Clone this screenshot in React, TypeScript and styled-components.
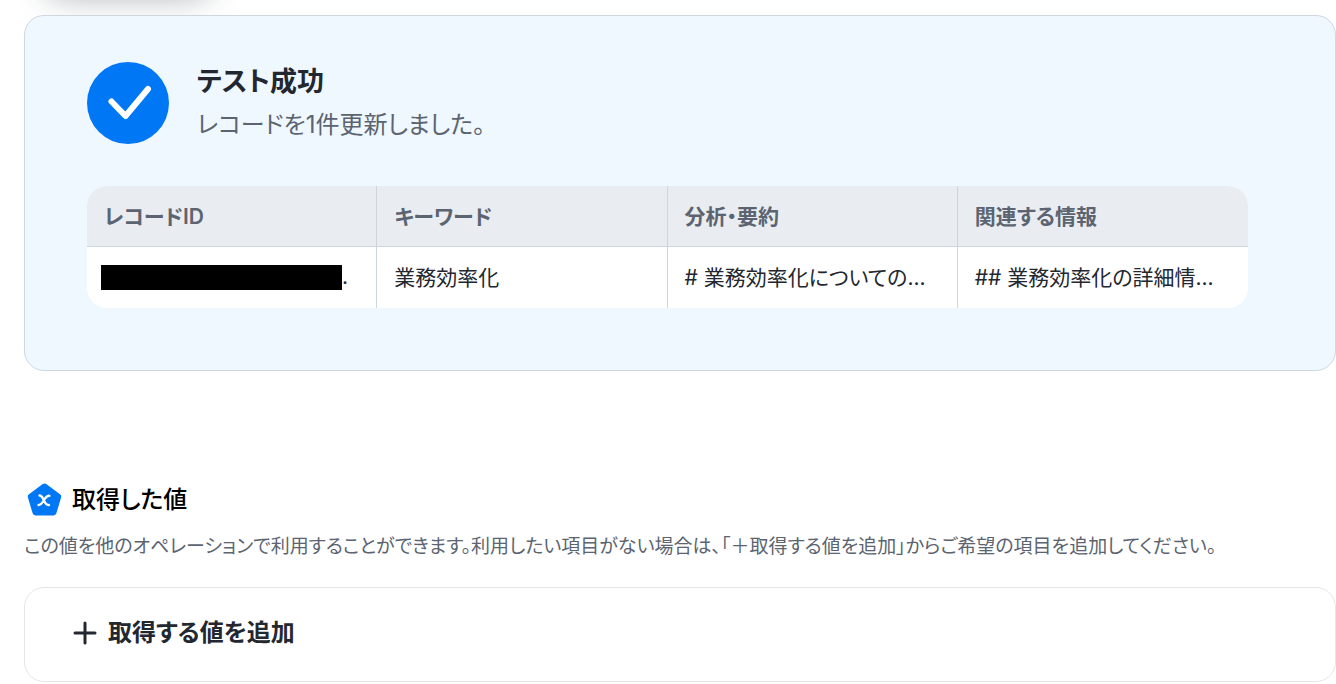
import React from 'react';
import styled, { createGlobalStyle } from 'styled-components';

const GlobalStyle = createGlobalStyle`
  *, *::before, *::after { box-sizing: border-box; }
  body {
    margin: 0;
    background: #fff;
    color: #23272f;
    font-family: Inter, "Noto Sans CJK JP", sans-serif;
    font-feature-settings: "palt";
  }
  h2, h3, p { margin: 0; }
`;

const Page = styled.main`
  padding: 15px 0 0 24px;
  overflow: hidden;
`;

const FloatingTab = styled.div`
  height: 40px;
  width: 160px;
  margin: -67px 0 27px 24px;
  border-radius: 12px;
  box-shadow: 0 8px 32px rgba(35, 50, 60, 0.4);
`;

const ResultPanel = styled.section`
  padding: 46px 87px 62px 62px;
  border: 1px solid #cdd7e1;
  border-radius: 20px;
  background: #eff7ff;
`;

const ResultHeader = styled.header`
  display: flex;
  align-items: flex-start;
  gap: 28px;
  margin-bottom: 38px;
`;

const StatusIcon = styled.svg`
  flex: none;
  width: 82px;
  height: 82px;
`;

const ResultTitle = styled.h2`
  font-size: 27px;
  line-height: 40px;
  font-weight: 700;
`;

const ResultMessage = styled.p`
  color: #5b6470;
  font-size: 24px;
  line-height: 46px;
  font-weight: 400;
`;

const TableFrame = styled.div`
  overflow: hidden;
  border-radius: 20px;
  background: #fff;
`;

const Table = styled.table`
  width: 100%;
  table-layout: fixed;
  border-collapse: separate;
  border-spacing: 0;
  font-size: 21px;
  line-height: 30px;
  text-align: left;
`;

const cell = `
  overflow: hidden;
  white-space: nowrap;
  &:not(:last-child) { border-right: 1px solid #cdd5dd; }
`;

const HeadCell = styled.th`
  ${cell}
  padding: 16px 17px 14px;
  border-bottom: 1px solid #cdd5dd;
  background: #e9edf2;
  color: #5b6470;
  font-weight: 600;
`;

const DataCell = styled.td<{ $masked?: boolean }>`
  ${cell}
  padding: ${(p) => (p.$masked ? '15px 14px 16px' : '16px 17px 15px')};
`;

const MaskedValue = styled.span`
  display: flex;
  align-items: center;
  height: 30px;
`;

const Redaction = styled.span`
  width: 241px;
  height: 25px;
  background: #000;
`;

const ValuesSection = styled.section`
  margin-top: 109px;
`;

const SectionTitle = styled.h2`
  display: flex;
  align-items: center;
  gap: 8px;
  color: #000;
  font-size: 24px;
  line-height: 40px;
  font-weight: 500;
`;

const ValueIcon = styled.svg`
  flex: none;
  width: 40px;
  height: 40px;
`;

const Description = styled.p`
  margin-top: 12px;
  color: #5b6470;
  font-size: 19px;
  line-height: 30px;
`;

const AddCard = styled.div`
  margin-top: 25px;
  padding: 23px 48px 26px;
  border: 1px solid #e6e6e6;
  border-radius: 20px;
`;

const AddButton = styled.button`
  display: flex;
  align-items: center;
  gap: 11px;
  padding: 0;
  border: 0;
  background: none;
  color: inherit;
  font: inherit;
  font-feature-settings: inherit;
  font-size: 24px;
  line-height: 44px;
  font-weight: 600;
  cursor: pointer;
`;

const headings = ['レコードID', 'キーワード', '分析・要約', '関連する情報'];
const values = ['業務効率化', '# 業務効率化についての...', '## 業務効率化の詳細情...'];

export default function App() {
  return (
    <>
      <GlobalStyle />
      <Page>
        <FloatingTab aria-hidden="true" />
        <ResultPanel>
          <ResultHeader>
            <StatusIcon viewBox="0 0 82 82" aria-hidden="true">
              <circle cx="41" cy="41" r="41" fill="#0077f5" />
              <path
                d="M24.5 39.5 38.5 54 61 27"
                fill="none"
                stroke="#fff"
                strokeWidth="6"
                strokeLinecap="round"
                strokeLinejoin="round"
              />
            </StatusIcon>
            <div>
              <ResultTitle>テスト成功</ResultTitle>
              <ResultMessage>レコードを1件更新しました。</ResultMessage>
            </div>
          </ResultHeader>
          <TableFrame>
            <Table>
              <thead>
                <tr>
                  {headings.map((h) => (
                    <HeadCell key={h} scope="col">{h}</HeadCell>
                  ))}
                </tr>
              </thead>
              <tbody>
                <tr>
                  <DataCell $masked>
                    <MaskedValue><Redaction />.</MaskedValue>
                  </DataCell>
                  {values.map((v) => (
                    <DataCell key={v}>{v}</DataCell>
                  ))}
                </tr>
              </tbody>
            </Table>
          </TableFrame>
        </ResultPanel>

        <ValuesSection>
          <SectionTitle>
            <ValueIcon viewBox="0 0 40 40" aria-hidden="true">
              <path
                d="M20.5 6.5 34.2 16.7 29.5 32.5H11.5L6.8 16.7Z"
                fill="#0077f5"
                stroke="#0077f5"
                strokeWidth="6"
                strokeLinejoin="round"
              />
              <path
                d="M15.5 15.5C18 15.500 18.600 17.500 19.800 20.300S22.500 25.500 25 25M25.500 15.800C22.500 15.200 21.500 18 19.800 20.300S17 25.500 14.500 25"
                fill="none"
                stroke="#fff"
                strokeWidth="2.3"
                strokeLinecap="round"
              />
            </ValueIcon>
            取得した値
          </SectionTitle>
          <Description>
            この値を他のオペレーションで利用することができます。利用したい項目がない場合は、「＋取得する値を追加」からご希望の項目を追加してください。
          </Description>
          <AddCard>
            <AddButton type="button">
              <svg width="24" height="24" viewBox="0 0 24 24" aria-hidden="true">
                <path d="M12 2V22M2 12H22" stroke="#23272f" strokeWidth="3" strokeLinecap="round" />
              </svg>
              取得する値を追加
            </AddButton>
          </AddCard>
        </ValuesSection>
      </Page>
    </>
  );
}
